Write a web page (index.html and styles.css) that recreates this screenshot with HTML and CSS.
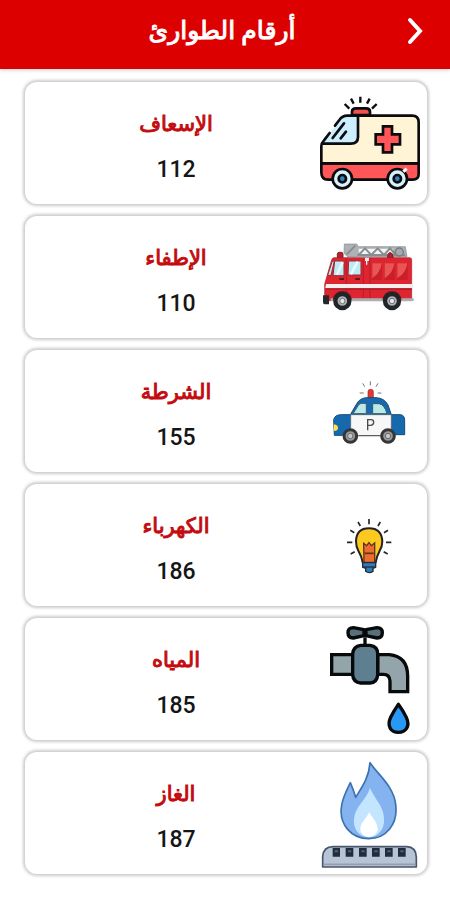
FILE: index.html
```html
<!DOCTYPE html>
<html lang="ar" dir="rtl">
<head>
<meta charset="utf-8">
<meta name="viewport" content="width=device-width, initial-scale=1">
<title>أرقام الطوارئ</title>
<link rel="stylesheet" href="styles.css">
</head>
<body>
<header class="bar">
  <button class="back" type="button" aria-label="رجوع">
    <svg viewBox="0 0 16 28" aria-hidden="true"><path d="M3 3 13 14 3 25"/></svg>
  </button>
  <h1 class="title">أرقام الطوارئ</h1>
</header>
<main class="list">
  <article class="card">
    <svg class="icon" viewBox="3 -9 348 366" aria-hidden="true">
      <g stroke="#0b0b10" stroke-width="8" stroke-linecap="round" stroke-linejoin="round">
        <path d="M126 90V80Q126 70 138 70H168Q180 70 180 80V90Z" fill="#f2504f"/>
        <path d="M34 235V184Q34 174 42 167L84 108Q94 92 112 92H306Q326 92 326 112V235Z" fill="#fff4d5" stroke="none"/>
        <path d="M34 235H326V268Q326 284 308 284H54Q34 284 34 262Z" fill="#ff5757"/>
        <path d="M42 172 84 110Q94 94 112 92H144V156Q144 176 122 176H38Z" fill="#ccefff" stroke="none"/>
        <path d="M75 122 88 105Q97 92 112 92H306Q326 92 326 112V235H34V184Q34 174 42 166L59 144" fill="none"/>
        <path d="M144 94V156Q144 176 122 176H40M68 159 102 115M92 160 108 140" fill="none"/>
        <path d="M219 124H246V148H270V178H246V202H219V178H197V148H219Z" fill="#ff5757" stroke-linejoin="miter"/>
        <path d="M151 35V53M123 41 131 56M179 41 171 56M104 57 118 71M200 57 186 71" fill="none" stroke-width="7" stroke-linecap="butt"/>
        <circle cx="97" cy="281" r="29" fill="#d7f2fb"/>
        <circle cx="262" cy="281" r="29" fill="#d7f2fb"/>
        <circle cx="97" cy="281" r="11" fill="#3485bd"/>
        <circle cx="262" cy="281" r="11" fill="#3485bd"/>
      </g>
      <path d="M280 260 290 251" stroke="#fff" stroke-width="9"/>
    </svg>
    <div class="info"><h2 class="name">الإسعاف</h2><p class="number">112</p></div>
  </article>
  <article class="card">
    <svg class="icon" viewBox="3 -27 348 366" aria-hidden="true">
      <path d="M103 57H140L145 65H286L291 95H112L102 84Z" fill="#aeb2b4" stroke="#858a8e" stroke-width="2"/>
      <path d="M146 71H250L246 89H147Z" fill="#f4f4f4"/>
      <path d="M110 88 136 62M146 90 165 70 184 90 203 70 222 90 240 70 261 93M142 90H286" fill="none" stroke="#888d91" stroke-width="6"/>
      <circle cx="268" cy="81" r="12" fill="#a6aaad" stroke="#757b80" stroke-width="4"/>
      <path d="M82 98V88Q82 82 88 82H94Q99 82 99 88V98ZM232 98 235 86Q240 79 246 86L250 98Z" fill="#bd202b" stroke="#732126" stroke-width="3"/>
      <path d="M72 98H299Q305 98 305 104V227H44V177L64 108Q66 98 72 98Z" fill="#df2530" stroke="#a91f2c" stroke-width="2"/>
      <path d="M74 108H102V152H69ZM116 108H153V150H114ZM67 108 53 151H63L73 108Z" fill="#bcebf3" stroke="#a32730" stroke-width="3"/>
      <path d="M81 149 98 112M123 148 143 110" stroke="#e9fcff" stroke-width="7"/>
      <path d="M180 100V220M109 102V220M160 102V220" stroke="#9b1d29" stroke-width="2"/>
      <path d="M186 114H216V165H186ZM223 114H254V165H223ZM261 114H293V165H261Z" fill="#c91f2b"/>
      <path d="M187 115H215Q212 143 187 160ZM224 115H253Q249 145 224 160ZM262 115H292Q288 145 262 160Z" fill="#e95455"/>
      <path d="M48 177H306V190H46Z" fill="#f9eeee"/>
      <path d="M46 190H306V194H46Z" fill="#ad1b27"/>
      <path d="M88 162H102M136 162H150" stroke="#541d28" stroke-width="6"/>
      <path d="M165 98H177V108H172V119H168V108H165Z" fill="#eee"/>
      <path d="M62 220H311V228H62Z" fill="#a8b0b4"/>
      <path d="M39 211H57V238H44Q39 238 39 231Z" fill="#25272b"/>
      <path d="M68 224Q73 198 97 198T126 224ZM217 224Q222 198 246 198T275 224Z" fill="#651d26"/>
      <g stroke="#222528" stroke-width="13" fill="#aeb2b4"><circle cx="97" cy="228" r="21"/><circle cx="246" cy="228" r="21"/></g>
      <g fill="#e4e5e5" stroke="#6f7578" stroke-width="3"><circle cx="97" cy="228" r="8"/><circle cx="246" cy="228" r="8"/></g>
    </svg>
    <div class="info"><h2 class="name">الإطفاء</h2><p class="number">110</p></div>
  </article>
  <article class="card">
    <svg class="icon" viewBox="-27 -60 348 366" aria-hidden="true">
      <path d="M144 84V65Q144 58 152 58T160 65V84Z" fill="#ee3527" stroke="#8c302f" stroke-width="2"/>
      <path d="M151 34V46M128 40 134 50M174 40 168 50M119 69H131M173 69H184" stroke="#747474" stroke-width="3"/>
      <path d="M41 149Q44 134 64 134H91L111 100Q119 85 139 83H168Q193 84 204 105L214 134H242Q254 136 254 151V194H226L205 181 181 196H116L91 183 67 196H43Z" fill="#1769ae" stroke="#174b79" stroke-width="3"/>
      <path d="M92 134H214V197H92Z" fill="#f7f7f7" stroke="#555" stroke-width="2"/>
      <path d="M99 131 115 106Q119 100 125 100H139V131ZM158 131V101H177Q193 103 201 131Z" fill="#bce9e5" stroke="#315d70" stroke-width="3"/>
      <path d="M42 163Q54 165 54 174T42 183Z" fill="#ffe04d"/>
      <path d="M143 181V149H153Q161 149 161 157T153 166H144" fill="none" stroke="#4a4a4a" stroke-width="4"/>
      <path d="M116 197H181" stroke="#555" stroke-width="3"/>
      <g fill="#97999a" stroke="#343638" stroke-width="9"><circle cx="91" cy="198" r="19"/><circle cx="204" cy="198" r="19"/></g>
      <g fill="#c7c8c8" stroke="#67696b" stroke-width="3"><circle cx="91" cy="198" r="8"/><circle cx="204" cy="198" r="8"/></g>
    </svg>
    <div class="info"><h2 class="name">الشرطة</h2><p class="number">155</p></div>
  </article>
  <article class="card">
    <svg class="icon" viewBox="-57 -63 348 366" aria-hidden="true">
      <path d="M98 172Q95 154 85 137Q78 125 78 109Q79 70 117 70T157 109Q157 125 149 137Q140 154 137 172Z" fill="#fdc91e" stroke="#242126" stroke-width="6"/>
      <path d="M101 115 110 122 117 113 124 122 134 114V172H102Z" fill="#ee6c2d" stroke="#593424" stroke-width="4"/>
      <path d="M104 145H131" stroke="#593424" stroke-width="5"/>
      <path d="M98 173H137V187L129 190V199Q117 207 107 199V190L98 187Z" fill="#317dba" stroke="#202c3a" stroke-width="4"/>
      <path d="M101 186H134" stroke="#202c3a" stroke-width="4"/>
      <path d="M117 42V58M84 51 91 63M151 51 144 63M61 76 73 83M174 76 162 83M51 112H67M168 112H184M62 147 74 140M173 147 161 140" stroke="#27272a" stroke-width="5"/>
    </svg>
    <div class="info"><h2 class="name">الكهرباء</h2><p class="number">186</p></div>
  </article>
  <article class="card">
    <svg class="icon" viewBox="3 9 348 366" aria-hidden="true">
      <g stroke="#07090a" stroke-width="10" stroke-linejoin="round">
        <path d="M65 119H128V178H65ZM203 119H238Q293 124 293 184V230H240V198Q239 178 220 178H203Z" fill="#93a4ab" stroke-linejoin="miter"/>
        <path d="M165 67V92" fill="none"/>
        <path d="M152 91H180Q203 94 203 116V180Q201 203 180 204H152Q130 202 128 180V116Q130 94 152 91Z" fill="#5d7f8f"/>
        <path d="M162 44 130 38Q114 38 114 53T130 69L162 62ZM168 44 201 38Q217 38 217 53T201 69L168 62Z" fill="#587078"/>
        <path d="M165 43V65" fill="none"/>
        <path d="M265 268Q250 290 242 307C229 335 244 352 265 352S302 335 289 307Q281 290 265 268Z" fill="#2798f4"/>
      </g>
    </svg>
    <div class="info"><h2 class="name">المياه</h2><p class="number">185</p></div>
  </article>
  <article class="card">
    <svg class="icon" viewBox="3 6 348 366" aria-hidden="true">
      <path d="M180 38C205 75 251 109 257 163C265 223 228 266 176 266S85 223 95 166C98 143 111 119 121 98Q129 116 137 142C157 110 177 83 180 38Z" fill="#84b3ef" stroke="#3d72ae" stroke-width="5" stroke-linejoin="round"/>
      <path d="M180 114C193 146 222 169 222 206C224 239 205 259 177 262C145 260 129 235 132 207C134 170 169 151 180 114Z" fill="#c3e5ff"/>
      <path d="M178 187C188 205 202 217 203 236C203 249 194 258 178 261C160 259 151 250 151 236C152 217 168 207 178 187Z" fill="#fff"/>
      <path d="M38 351V319Q41 290 69 290H290Q318 291 319 321V351Z" fill="#b6c4d5" stroke="#49566a" stroke-width="5" stroke-linejoin="round"/>
      <path d="M68 294H90V320H68ZM107 294H130V320H107ZM147 294H170V320H147ZM186 294H209V320H186ZM225 294H248V320H225ZM264 294H287V320H264Z" fill="#202d3c"/>
      <path d="M74 304H84M114 304H124M154 304H164M193 304H203M232 304H242M271 304H281" stroke="#4f6374" stroke-width="6"/>
      <path d="M41 343H316" stroke="#929fae" stroke-width="5"/>
    </svg>
    <div class="info"><h2 class="name">الغاز</h2><p class="number">187</p></div>
  </article>
</main>
</body>
</html>
```
FILE: styles.css
```css
* { box-sizing: border-box; }
body {
  margin: 0;
  background: #fff;
  color: #151515;
  font-family: Roboto, "DejaVu Sans", sans-serif;
}
.bar {
  display: grid;
  grid-template-columns: 48px 1fr 48px;
  align-items: center;
  height: 69px;
  padding: 0 11px 8px 5px;
  background: #dc0000;
  color: #fff;
  box-shadow: 0 1px 4px #0003;
}
.back {
  display: grid;
  place-items: center;
  width: 48px;
  height: 48px;
  padding: 0;
  border: 0;
  background: none;
}
.back svg {
  width: 16px;
  height: 28px;
  fill: none;
  stroke: #fff;
  stroke-width: 4;
  stroke-linecap: round;
}
.title {
  margin: 0;
  text-align: center;
  font-size: 25px;
  line-height: 32px;
  font-weight: 400;
  -webkit-text-stroke: 1px;
}
.list {
  display: grid;
  gap: 12px;
  padding: 13px 23px 20px 25px;
}
.card {
  display: grid;
  grid-template-columns: 116px 1fr;
  align-items: center;
  min-height: 122px;
  padding-left: 16px;
  border-radius: 12px;
  background: #fff;
  box-shadow: 0 0 3px 2px #0003;
}
.icon {
  display: block;
  width: 116px;
  height: 122px;
}
.info {
  display: grid;
  gap: 14px;
  padding-top: 8px;
  text-align: center;
}
.name, .number {
  margin: 0;
  line-height: 32px;
}
.name {
  color: #c40c10;
  font-size: 21px;
  font-weight: 400;
  -webkit-text-stroke: 1px;
}
.number {
  font-size: 23px;
  font-weight: 500;
}
```
